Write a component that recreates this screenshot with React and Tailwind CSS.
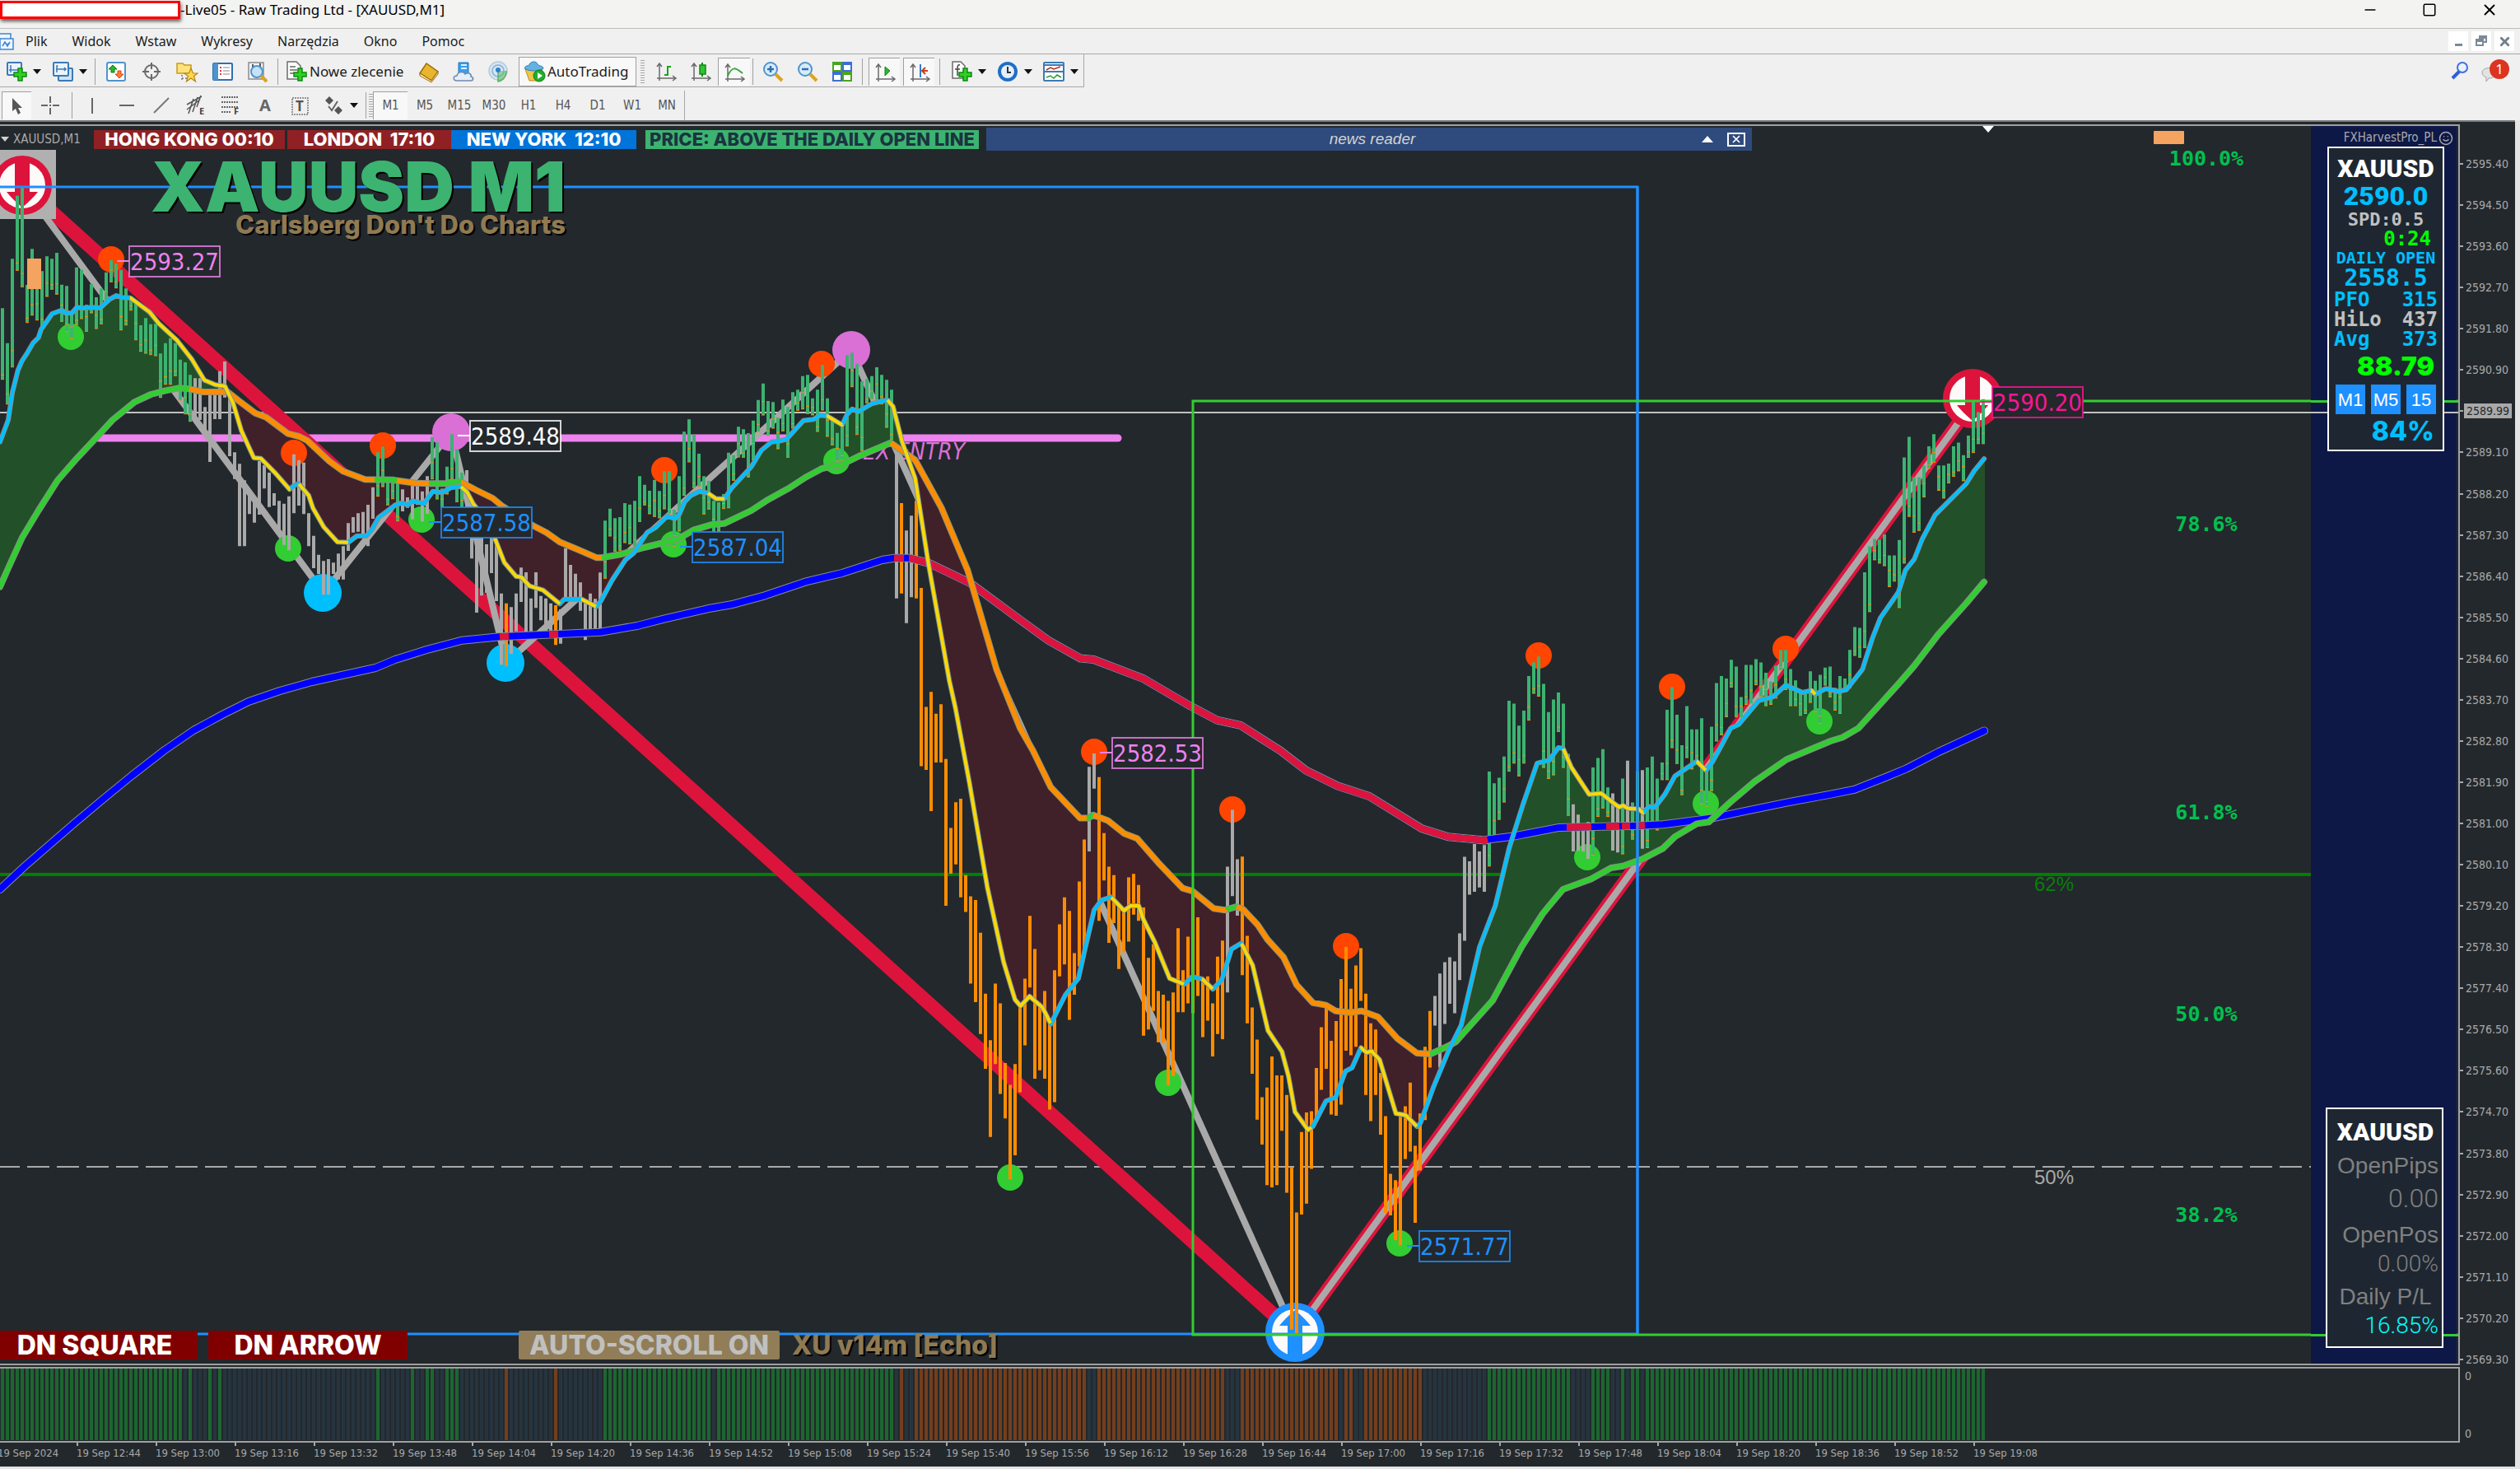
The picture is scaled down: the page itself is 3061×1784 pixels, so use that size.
import React from 'react'
import { Minus, Smile, Square, X } from 'lucide-react'

/* ---------- price data ---------- */

// high/low pairs, one block per stretch of the session; k and y0 turn them into chart units
const blocks = [
  {
    k: 3, y0: 180, bars: [
      583, 842, 710, 932, 403, 797, 173, 445, 145, 505, 498, 635, 367, 608, 480, 626, 448, 650, 394, 540,
      403, 514, 381, 532, 497, 631, 502, 668, 600, 693, 434, 643, 443, 621, 570, 667, 495, 600, 543, 657,
      511, 640, 452, 560, 408, 487, 421, 509, 443, 662, 511, 644, 545, 590, 565, 698, 645, 740, 619, 747,
      641, 752, 640, 756, 748, 908, 710, 860, 692, 860, 710, 829, 770, 918, 780, 968, 826, 995, 838, 988,
      838, 990, 943, 1035, 900, 1143, 900, 987, 812, 987, 777, 908, 895, 1122, 1108, 1205, 1150, 1450, 1210, 1450,
      1243, 1333, 1270, 1364, 1140, 1335, 1155, 1240, 1182, 1307, 1257, 1302, 1285, 1410, 1295, 1445, 1268, 1465, 1115, 1330,
      1136, 1302, 1145, 1333, 1330, 1450, 1412, 1530, 1481, 1551, 1504, 1627, 1497, 1627, 1510, 1551, 1477, 1571, 1450, 1571,
      1366, 1467, 1344, 1400, 1330, 1397, 1325, 1410, 1299, 1450, 1235, 1350, 1108, 1268, 1087, 1233, 1215, 1300, 1215, 1277,
      1215, 1358,
    ],
  },
  {
    k: 3, y0: 400, bars: [
      583, 663, 612, 650, 570, 692, 570, 640, 590, 700, 535, 672, 392, 545, 412, 618, 580, 650, 500, 600,
      382, 545, 437, 628, 522, 650, 513, 645, 645, 835, 700, 1032, 735, 970, 783, 960, 758, 888, 765, 990,
      962, 1222, 998, 1228, 1012, 1182, 962, 1100, 868, 993, 885, 1105, 980, 1100, 885, 1015, 971, 1060, 980, 1100,
      998, 1100, 1005, 1150, 1020, 1145, 797, 985, 858, 980, 890, 985, 922, 1025, 985, 1132, 962, 1100, 982, 1100,
      886, 1100, 697, 907, 653, 753, 688, 808, 684, 805, 633, 777, 638, 782, 625, 793, 535, 700, 566, 640,
      588, 672, 548, 682, 589, 687, 517, 654, 517, 672, 657, 790, 535, 735, 373, 605, 328, 483, 383, 577,
      453, 573, 535, 673, 552, 655, 625, 740, 630, 735, 600, 653, 449, 650, 458, 550, 355, 465, 364, 466,
      378, 538, 332, 475, 257, 373, 197, 312, 261, 387, 265, 360, 322, 435, 256, 370, 283, 466, 229, 360,
      220, 295, 170, 290, 166, 307, 251, 312, 220, 372, 130, 294, 251, 390, 330, 421, 377, 480, 345, 476,
      94, 425, 85, 209, 125, 383, 190, 442, 180, 268, 170, 255, 138, 258, 166, 272, 184, 357, 220, 400,
      430, 980, 633, 962, 733, 1070, 679, 976, 625, 980,
    ],
  },
  {
    k: 2.529, y0: 860, bars: [
      -369, 178, -4, 190, -50, 316, 17, 167, -12, 167, 156, 607, 368, 508, 289, 480, 278, 581, 513, 626,
      578, 846, 589, 903, 690, 1001, 877, 1108, 1020, 1317, 846, 1093, 907, 1185, 1090, 1260, 1157, 1447, 1093, 1373,
      910, 1180, 831, 1036, 638, 858, 740, 1138, 905, 1112, 869, 1138, 970, 1233, 805, 1210, 664, 824, 581, 787,
      623, 957, 752, 880, 532, 793, 403, 740, 180, 440, 139, 247, 212, 653, 384, 529, 487, 721, 513, 660,
      610, 801, 615, 750, 520, 717, 509, 634, 543, 653, 612, 1006, 767, 987, 725, 930, 869, 1026, 880, 1028,
      899, 1158, 873, 1130, 676, 934, 805, 934, 702, 907, 565, 937, 642, 884, 830, 1010, 824, 960, 907, 1070,
      763, 1001, 714, 1017, 487, 873, 312, 577, 464, 637, 456, 820, 699, 968, 919, 1123, 1018, 1264, 1195, 1340,
      1165, 1465, 1070, 1472, 1128, 1465, 1128, 1298, 1188, 1488, 1410, 1909, 1549, 1920, 1302, 1555, 1242, 1522, 1238, 1415,
      1105, 1270, 980, 1172, 920, 1108, 1022, 1248, 961, 1252, 832, 1218, 733, 1052, 862, 1066, 790, 1040, 737, 899,
      877, 1188, 968, 1268, 987, 1188, 1120, 1310, 1253, 1550, 1430, 1558, 1450, 1634, 1255, 1650, 1223, 1385, 1150, 1362,
      1344, 1581, 1245, 1420, 1040, 1265, 930, 1104, 884, 975, 815, 1104, 780, 970, 765, 908, 778, 937, 692, 835,
    ],
  },
  {
    k: 2.24, y0: 400, bars: [
      1435, 1663, 1447, 1538, 1400, 1530, 1420, 1518, 1403, 1530, 1203, 1460, 1235, 1380, 1220, 1333, 1162, 1286, 1010, 1202,
      1018, 1180, 1078, 1215, 1037, 1180, 943, 1063, 906, 990, 890, 998, 964, 1192, 1041, 1222, 1007, 1212, 988, 1094,
      1018, 1192, 1155, 1322, 1292, 1420, 1320, 1418, 1355, 1420, 1340, 1440, 1192, 1430, 1166, 1325, 1142, 1302, 1246, 1325,
      1262, 1418, 1290, 1423, 1222, 1427, 1173, 1345, 1287, 1387, 1203, 1350, 1199, 1413, 1192, 1410, 1162, 1340, 1222, 1362,
      1178, 1225, 1035, 1225, 973, 1138, 1048, 1181, 1131, 1266, 1025, 1165, 1088, 1196, 1088, 1180, 1058, 1290, 1190, 1297,
      1081, 1255, 962, 1120, 943, 1103, 950, 1054, 899, 973, 917, 1054, 1000, 1056, 913, 1020, 913, 1018, 897, 967,
      906, 1000, 934, 1024, 958, 1020, 915, 1003, 872, 927, 872, 980, 924, 1024, 955, 1024, 980, 1050, 980, 1045,
      930, 1015, 956, 1040, 940, 1072, 920, 968, 917, 1000, 975, 1036, 943, 1045, 950, 985, 872, 975, 810, 887,
      812, 892, 661, 866, 590, 768, 570, 627, 572, 636, 558, 643, 615, 700, 615, 685, 573, 757, 348, 636,
      292, 509, 402, 552, 402, 547, 370, 456, 318, 378, 285, 362, 370, 438, 370, 459, 365, 418, 318, 400,
      308, 385, 342, 412, 289, 348, 195, 335, 225, 311, 190, 311,
    ],
  },
]

const bars = blocks.flatMap(({ k, y0, bars: b }) =>
  Array.from({ length: b.length / 2 }, (_, i) => [y0 + b[2 * i] / k, y0 + b[2 * i + 1] / k])
)
const barX = i => 3 + i * 6

const inRuns = (i, runs) => runs.some(([a, b]) => i >= a && i <= b)

const bullBars = [[0, 38], [76, 80], [87, 93], [122, 180], [301, 317], [322, 325], [328, 328], [330, 331], [333, 401]]
const bearBars = [[102, 102], [112, 112], [182, 182], [185, 219], [222, 247], [251, 289]]
const bullHist = [[0, 36], [38, 38], [42, 42], [44, 44], [76, 76], [83, 83], [86, 87], [90, 92], [122, 143], [145, 180], [301, 317], [322, 325], [328, 328], [330, 331], [333, 401]]
const bearHist = [[102, 102], [112, 112], [182, 182], [185, 219], [222, 247], [251, 270], [272, 273], [276, 287]]

const trace = (x0, y0, kx, ky, pts) =>
  Array.from({ length: pts.length / 2 }, (_, i) => [x0 + pts[2 * i] / kx, y0 + pts[2 * i + 1] / ky])

const fastMA = [
  ...trace(0, 180, 3, 3, [0, 1070, 30, 990, 45, 890, 65, 810, 80, 775, 100, 745, 120, 710, 140, 690, 150, 660, 190, 603, 225, 590, 240, 601, 262, 601, 280, 580, 300, 583, 335, 580, 365, 582, 400, 550, 424, 537, 445, 544, 475, 545, 545, 597, 580, 640, 645, 700, 700, 770, 745, 845, 785, 862, 820, 867, 850, 930, 880, 1030, 925, 1128, 950, 1130, 1000, 1180, 1055, 1243, 1070, 1230, 1088, 1222, 1125, 1265, 1140, 1310, 1180, 1380, 1230, 1435, 1270, 1436, 1300, 1413, 1335, 1412, 1355, 1390, 1380, 1345, 1430, 1308]),
  ...trace(480, 400, 2.45, 3, [0, 640, 20, 632, 38, 640, 52, 625, 85, 635, 112, 590, 140, 595, 165, 577, 195, 572, 215, 595, 232, 635, 275, 700, 298, 765, 325, 850, 360, 900, 375, 902, 400, 935, 440, 950, 490, 1000, 503, 983, 555, 983, 598, 1010, 612, 990, 645, 915, 685, 840, 710, 815, 750, 740, 775, 722, 810, 680, 832, 690, 845, 675, 862, 628, 880, 605, 905, 590, 930, 596, 955, 617, 980, 617, 1000, 580, 1060, 500, 1090, 440, 1120, 410, 1140, 408, 1165, 400, 1215, 332, 1245, 328, 1265, 313, 1285, 315, 1330, 348, 1345, 310, 1360, 290, 1378, 300, 1420, 270, 1465, 257]),
  ...trace(1000, 380, 1.568, 2.24, [133, 255, 150, 350, 175, 450, 200, 680, 240, 1000]),
  ...trace(1140, 860, 2.529, 2.529, [52, 0, 95, 230, 150, 550, 200, 780, 235, 895, 252, 915, 280, 885, 320, 920, 345, 970, 360, 940, 390, 880, 430, 830, 450, 740, 478, 620, 500, 590, 530, 580, 570, 622, 590, 607, 615, 607, 630, 650, 665, 720, 710, 830, 755, 848, 780, 825, 810, 832, 843, 863, 870, 835, 900, 740, 930, 722, 965, 790, 1012, 990, 1055, 1055, 1075, 1130, 1095, 1240, 1135, 1295, 1150, 1285, 1190, 1207, 1220, 1195, 1250, 1115, 1270, 1105, 1298, 1043, 1315, 1058, 1330, 1053, 1355, 1080, 1405, 1245, 1435, 1250, 1470, 1285, 1480, 1275, 1520, 1165, 1568, 1050]),
  ...trace(1000, 1000, 1.568, 2, [1215, 490, 1250, 300]),
  ...trace(1700, 400, 2.063, 2.24, [240, 1568, 275, 1410, 310, 1290, 345, 1180, 375, 1172, 398, 1138, 410, 1140, 430, 1190, 475, 1265, 505, 1262, 550, 1300, 560, 1295, 572, 1303, 600, 1305, 610, 1315, 625, 1298, 640, 1300, 665, 1265, 690, 1215, 745, 1175, 768, 1200, 785, 1175, 800, 1145, 830, 1085, 850, 1075, 900, 1010, 935, 1000, 968, 968, 1010, 988, 1032, 982, 1042, 993, 1068, 977, 1100, 985, 1120, 980, 1160, 925, 1185, 840, 1205, 785, 1250, 715, 1268, 655, 1290, 625, 1310, 570, 1342, 505, 1420, 420, 1440, 385, 1465, 352]),
]

const slowMA = [
  ...trace(0, 180, 3, 3, [0, 1598, 30, 1530, 80, 1420, 140, 1320, 210, 1210, 280, 1130, 350, 1055, 410, 990, 490, 925, 550, 897, 600, 884, 650, 874, 690, 877, 740, 888, 830, 888, 870, 920, 930, 965, 970, 980, 1050, 1040, 1090, 1050, 1120, 1065, 1200, 1140, 1250, 1177, 1330, 1207, 1430, 1208]),
  ...trace(480, 400, 2.45, 3, [0, 550, 60, 560, 100, 562, 150, 562, 165, 557, 197, 557, 240, 585, 290, 615, 320, 645, 410, 715, 450, 740, 490, 775, 540, 800, 600, 832, 615, 832, 670, 820, 740, 795, 840, 765, 890, 730, 940, 712, 980, 707, 1060, 660, 1110, 620, 1170, 580, 1220, 540, 1270, 507, 1330, 492, 1380, 462, 1475, 413]),
  ...trace(1000, 380, 1.568, 2.24, [150, 375, 175, 400, 225, 530, 275, 700, 330, 970, 375, 1130]),
  ...trace(1140, 860, 2.529, 2.529, [290, 130, 345, 243, 435, 338, 460, 338, 475, 328, 520, 345, 570, 385, 610, 400, 680, 480, 750, 553, 780, 562, 845, 615, 880, 620, 915, 610, 935, 617, 980, 665, 1010, 710, 1060, 765, 1100, 850, 1150, 905, 1190, 912, 1220, 930, 1265, 935, 1300, 930, 1350, 948, 1410, 1015, 1470, 1060, 1512, 1062, 1568, 1037]),
  ...trace(1000, 1000, 1.568, 2, [1205, 530, 1275, 430, 1330, 300, 1370, 220]),
  ...trace(1700, 400, 2.063, 2.24, [375, 1568, 410, 1523, 480, 1495, 530, 1465, 560, 1460, 610, 1440, 660, 1412, 690, 1380, 745, 1345, 775, 1340, 830, 1285, 890, 1230, 970, 1170, 1080, 1120, 1110, 1110, 1150, 1085, 1200, 1025, 1250, 965, 1290, 915, 1350, 830, 1420, 745, 1465, 687]),
]

const trendMA = [
  [0, 1080], [30, 1052], [60, 1026], [90, 1000], [127, 969], [160, 942], [200, 911], [235, 887], [270, 868], [302, 852], [340, 839], [379, 828], [456, 811],
  ...trace(480, 400, 2.45, 3, [0, 1203, 100, 1165, 200, 1133, 310, 1120, 450, 1112, 610, 1103, 720, 1080, 800, 1055, 930, 1018, 1000, 1003, 1100, 970, 1220, 920, 1330, 888, 1450, 840]),
  ...trace(1000, 380, 1.568, 2.24, [135, 667, 165, 667, 200, 680, 280, 735, 370, 830, 430, 892, 490, 940, 515, 943, 610, 995, 700, 1070, 750, 1108, 795, 1122, 870, 1190, 920, 1245, 980, 1287, 1040, 1315, 1140, 1403, 1190, 1425, 1260, 1435]),
  ...trace(1700, 400, 2.063, 2.24, [225, 1387, 290, 1378, 400, 1355, 600, 1350, 660, 1347, 780, 1330, 860, 1312, 970, 1287, 1080, 1265, 1140, 1252, 1210, 1222, 1270, 1195, 1350, 1150, 1465, 1092]),
]

const fastDown = [[158, 352], [363, 423], [560, 680], [706, 724], [860, 880], [1004, 1023], [1078, 1276], [1350, 1438], [1460, 1473], [1508, 1593], [1653, 1721], [1899, 1996], [2061, 2072], [2200, 2205]]
const slowDown = [[230, 455], [482, 521], [560, 731], [1082, 1320], [1328, 1488], [1502, 1737]]
const trendDown = [[607, 618], [667, 678], [1086, 1098], [1104, 1807], [1903, 1933], [1951, 1967], [1970, 1980], [1987, 1998]]

const at = (pts, x) => {
  const i = pts.findIndex(p => p[0] >= x)
  if (i <= 0) return i === 0 ? pts[0][1] : pts[pts.length - 1][1]
  const [x1, y1] = pts[i - 1]
  const [x2, y2] = pts[i]
  return y1 + ((y2 - y1) * (x - x1)) / (x2 - x1)
}
const join = pts => pts.map(([x, y]) => `${x.toFixed(1)},${y.toFixed(1)}`).join(' ')
const slice = (pts, a, b) => [[a, at(pts, a)], ...pts.filter(p => p[0] > a && p[0] < b), [b, at(pts, b)]]

// cloud between the two averages, cut wherever they cross
const clouds = () => {
  const out = []
  let cur = null
  for (let x = 0; x <= 2411; x++) {
    const f = at(fastMA, x)
    const s = at(slowMA, x)
    const up = f < s
    if (!cur || cur.up !== up) {
      cur = { up, top: [], bottom: [] }
      out.push(cur)
    }
    cur.top.push([x, f])
    cur.bottom.unshift([x, s])
  }
  return out
}

const barPath = keep =>
  bars.map(([hi, lo], i) => (keep(i) ? `M${barX(i)} ${hi.toFixed(1)}V${lo.toFixed(1)}` : '')).join('')
const isBull = i => inRuns(i, bullBars)
const isBear = i => inRuns(i, bearBars)
const openTicks = bars.map(([hi, lo], i) => {
  if (!isBull(i)) return ''
  const open = lo - Math.min(lo - hi, 36) * (0.15 + 0.1 * ((i * 7) % 5))
  return `M${barX(i) - 2} ${lo.toFixed(1)}h4M${barX(i) - 2} ${open.toFixed(1)}h4`
}).join('')

/* ---------- chart parts ---------- */

const highs = [[135, 315], [357, 550], [465, 541], [807, 571], [998, 442], [1329, 913], [1497, 983], [1635, 1149], [1869, 796], [2031, 834], [2169, 788]]
const lows = [[86, 409], [350, 666], [512, 631], [818, 661], [1016, 560], [1227, 1430], [1419, 1315], [1700, 1510], [1928, 1041], [2072, 976], [2210, 876]]

const priceTags = [
  { x: 157, y: 299, price: '2593.27', color: '#ee82ee' },
  { x: 571, y: 511, price: '2589.48', color: '#ffffff' },
  { x: 536, y: 616, price: '2587.58', color: '#1e90ff' },
  { x: 841, y: 646, price: '2587.04', color: '#1e90ff' },
  { x: 1351, y: 896, price: '2582.53', color: '#ee82ee' },
  { x: 1724, y: 1495, price: '2571.77', color: '#1e90ff' },
  { x: 2420, y: 470, price: '2590.20', color: '#ff1493' },
]

const fibs = [[192, '100.0%'], [636, '78.6%'], [986, '61.8%'], [1231, '50.0%'], [1475, '38.2%']]

const Average = ({ pts, up, down, runs, width }) => (
  <g fill="none" strokeLinecap="butt" strokeLinejoin="round">
    <polyline points={join(pts)} stroke="#8c8c8c" strokeWidth={width + 2} strokeLinecap="round" />
    <polyline points={join(pts)} stroke={up} strokeWidth={width} strokeLinecap="round" />
    {runs.map(([a, b]) => (
      <polyline key={a} points={join(slice(pts, a, b))} stroke={down} strokeWidth={width} />
    ))}
  </g>
)

const Signal = ({ x, y, color, flip }) => (
  <g transform={`translate(${x} ${y})${flip ? ' rotate(180)' : ''}`}>
    <circle r="32" fill="#fffafa" stroke={color} strokeWidth="8" />
    <path d="M-9 -32H9V8H19Q12 17 0 27Q-12 17 -19 8H-9Z" fill={color} />
  </g>
)

const PriceTag = ({ x, y, price, color }) => (
  <g>
    <path d={`M${x - 15} ${y + 18}h15`} stroke={color} strokeWidth="2" />
    <rect x={x} y={y} width="110" height="37" fill="#23282c" stroke={color} strokeOpacity="0.8" strokeWidth="2" />
    <text x={x + 55} y={y + 29} textAnchor="middle" fill={color} className="text-[29px]">{price}</text>
  </g>
)

const Chart = () => (
  <svg viewBox="0 153 2986 1503" className="block h-auto w-full font-['DejaVu_Sans_Condensed','Noto_Sans',sans-serif]">
    <rect y="153" width="2986" height="1503" fill="#23282c" />

    <path d="M0 501H2986" stroke="#c0c0c0" strokeWidth="2" />
    <path d="M120 532H1358" stroke="#ee82ee" strokeWidth="9" strokeLinecap="round" />
    <path d="M0 1062H2807" stroke="#008000" strokeWidth="4" />
    <path d="M-3 1417H2807" stroke="#a9a9a9" strokeWidth="2" strokeDasharray="27 9" />
    <text x="1048" y="558" fill="#da70d6" className="text-[28px] italic">EX ENTRY</text>

    <path d="M27 225L1573 1620" stroke="#dc143c" strokeWidth="17" />
    <path d="M1573 1620L2395 491" stroke="#dc143c" strokeWidth="16" />
    <path d="M27 225L393 720L548 525L615 805L1034 425L1573 1620L2395 491" fill="none" stroke="#a9a9a9" strokeWidth="8" />
    <rect x="0" y="182" width="68" height="84" fill="#b0b0b0" />

    {clouds().map(c => (
      <polygon key={c.top[0][0]} points={join([...c.top, ...c.bottom])} fill={c.up ? '#225029' : '#40212a'} />
    ))}

    <Signal x={27} y={225} color="#dc143c" />
    <Signal x={2396} y={484} color="#dc143c" />
    <Signal x={1573} y={1618} color="#1e90ff" flip />
    {highs.map(([x, y]) => <circle key={x} cx={x} cy={y} r="16" fill="#ff4500" />)}
    {lows.map(([x, y]) => <circle key={x} cx={x} cy={y} r="16" fill="#32cd32" />)}
    {[[548, 525], [1034, 425]].map(([x, y]) => <circle key={x} cx={x} cy={y} r="23" fill="#da70d6" />)}
    {[[392, 720], [614, 805]].map(([x, y]) => <circle key={x} cx={x} cy={y} r="23" fill="#00bfff" />)}

    <path d="M0 227H1989V1620H0" fill="none" stroke="#1e90ff" strokeWidth="3" />
    <path d={barPath(i => !isBull(i) && !isBear(i))} stroke="#a9a9a9" strokeWidth="4" />
    <path d={barPath(isBull)} stroke="#3cb371" strokeWidth="4" />
    <path d={barPath(isBear)} stroke="#ff8c00" strokeWidth="4" />
    <path d={openTicks} stroke="#ff8c00" strokeWidth="1" />
    <rect x="33" y="314" width="17" height="37" fill="#f4a460" />

    <Average pts={trendMA} up="#0000ff" down="#dc143c" runs={trendDown} width={8} />
    <Average pts={slowMA} up="#32cd32" down="#ff8c00" runs={slowDown} width={6} />
    <Average pts={fastMA} up="#00bfff" down="#ffd700" runs={fastDown} width={4} />

    <path d="M1989 227V1620" stroke="#1e90ff" strokeWidth="3" />
    <path d="M2986 487H1449V1621H2986" fill="none" stroke="#32cd32" strokeWidth="3" />

    {priceTags.map(t => <PriceTag key={t.price} {...t} />)}
    {fibs.map(([y, label]) => (
      <text key={label} x="2680" y={y + 9} textAnchor="middle" fill="#00c050" className="font-['DejaVu_Sans_Mono',monospace] text-[25px] font-bold">{label}</text>
    ))}
    <text x="2495" y="1082" textAnchor="middle" fill="#0a7d0a" className="font-['Liberation_Sans',sans-serif] text-[24px]">62%</text>
    <text x="2495" y="1438" textAnchor="middle" fill="#a9a9a9" className="font-['Liberation_Sans',sans-serif] text-[24px]">50%</text>

    <path d="M2408 153H2422L2415 161Z" fill="#ffffff" />
    <rect x="2616" y="159" width="37" height="16" rx="1" fill="#f4a460" />
  </svg>
)

const Histogram = () => (
  <svg viewBox="0 0 2986 88" preserveAspectRatio="none" className="block h-[88px] w-full">
    {bars.map((_, i) => (
      <rect
        key={i}
        x={barX(i) - 2}
        y="0"
        width="4"
        height="87"
        fill={inRuns(i, bullHist) ? '#1c6630' : inRuns(i, bearHist) ? '#733e1d' : '#26343f'}
      />
    ))}
  </svg>
)

/* ---------- side panels ---------- */

const PanelRow = ({ name, value, className = '' }) => (
  <div className={`flex h-[24px] items-center justify-between px-[6px] text-[24px] ${className}`}>
    <span>{name}</span>
    <span>{value}</span>
  </div>
)

const QuotePanel = () => (
  <section className="flex h-[370px] flex-col border-2 border-white bg-[#1e2731] pt-[6px] font-['DejaVu_Sans_Mono',monospace] font-bold text-[#00bfff]">
    <div className="flex h-[36px] items-center justify-center font-['Roboto',sans-serif] text-[30px] font-black text-white">XAUUSD</div>
    <div className="flex h-[32px] items-center justify-center font-['Roboto',sans-serif] text-[32px] font-black">2590.0</div>
    <div className="flex h-[24px] items-center justify-center text-[22px] text-[#c0c0c0]">SPD:0.5</div>
    <div className="flex h-[24px] items-center justify-end pr-[14px] text-[24px] text-[#00ff00]">0:24</div>
    <div className="flex h-[22px] items-center justify-center text-[20px] whitespace-nowrap">DAILY OPEN</div>
    <div className="flex h-[28px] items-center justify-center text-[28px]">2558.5</div>
    <PanelRow name="PFO" value="315" />
    <PanelRow name="HiLo" value="437" className="text-[#c0c0c0]" />
    <PanelRow name="Avg" value="373" />
    <div className="flex h-[42px] items-center justify-end pr-[10px] font-['Inter',sans-serif] text-[32px] font-black text-[#00ff00]">88.79</div>
    <div className="mt-px flex justify-between px-[8px]">
      {['M1', 'M5', '15'].map(tf => (
        <button key={tf} type="button" className="h-[36px] w-[36px] bg-[#1e90ff] font-['Liberation_Sans',sans-serif] text-[22px] font-normal text-white">{tf}</button>
      ))}
    </div>
    <div className="flex h-[42px] items-center justify-end pr-[10px] font-['Inter',sans-serif] text-[32px] font-extrabold">84%</div>
  </section>
)

const AccountPanel = () => (
  <section className="flex h-[292px] flex-col border-2 border-white bg-[#1e2731] pr-[4px] pl-[6px] pt-[7px] font-['Liberation_Sans',sans-serif] text-[28px] text-[#808080]">
    <div className="flex h-[40px] items-center justify-center font-['Roboto',sans-serif] text-[30px] font-black text-white">XAUUSD</div>
    <div className="mt-[4px] flex h-[36px] items-center justify-end">OpenPips</div>
    <div className="mt-[2px] flex h-[38px] items-center justify-end font-['Roboto',sans-serif] text-[32px] font-light">0.00</div>
    <div className="mt-[8px] flex h-[36px] items-center justify-end">OpenPos</div>
    <div className="flex h-[34px] items-center justify-end font-['Roboto',sans-serif] font-light">0.00%</div>
    <div className="mt-[5px] flex h-[36px] items-center justify-center">Daily P/L</div>
    <div className="flex h-[34px] items-center justify-end font-['Roboto',sans-serif] font-light text-[#00ffff]">16.85%</div>
  </section>
)

const Badge = ({ children, className }) => (
  <div className={`flex h-[23px] items-center justify-center font-['Inter',sans-serif] text-[22px] leading-[23px] font-extrabold whitespace-pre ${className}`}>{children}</div>
)

const Overlay = () => (
  <div className="absolute inset-0 flex flex-col font-['Inter',sans-serif]">
    <div className="flex items-center pt-[2px] text-white">
      <div className="flex h-[28px] w-[114px] items-center gap-[4px] font-['DejaVu_Sans_Condensed','Noto_Sans',sans-serif] text-[15px] text-[#a9a9a9]">
        <svg width="12" height="8" viewBox="0 0 12 8"><path d="M1 1H11L6 7Z" fill="#d0d0d0" /></svg>
        XAUUSD,M1
      </div>
      <Badge className="w-[232px] bg-[#8f2124]">HONG KONG 00:10</Badge>
      <Badge className="ml-[3px] w-[199px] bg-[#8f2124]">{'LONDON  17:10'}</Badge>
      <Badge className="w-[225px] bg-[#0074d9]">{'NEW YORK  12:10'}</Badge>
      <Badge className="ml-[11px] w-[405px] bg-[#3cb371] text-[#1c3340]">PRICE: ABOVE THE DAILY OPEN LINE</Badge>
      <div className="ml-[9px] flex h-[28px] w-[930px] items-center bg-[#2f4a7c] font-['Liberation_Sans',sans-serif] text-[19px] text-[#d3d3d3] italic">
        <span className="flex-1 pl-[70px] text-center">news reader</span>
        <button type="button" aria-label="Collapse" className="mr-[16px]">
          <svg width="16" height="10" viewBox="0 0 16 10"><path d="M8 1L15 9H1Z" fill="#fff" /></svg>
        </button>
        <button type="button" aria-label="Close reader" className="mr-[8px] flex h-[17px] w-[22px] items-center justify-center border-2 border-white">
          <X size={14} strokeWidth={3} color="#fff" />
        </button>
      </div>
    </div>
    <div className="w-[687px] text-right">
      <h1 className="mt-[8px] text-[84px] leading-[72px] font-black whitespace-nowrap text-[#3cb371] [text-shadow:2px_2px_0_#000]">XAUUSD M1</h1>
      <p className="text-[31px] leading-[20px] font-extrabold whitespace-nowrap text-[#8f7a52] [text-shadow:2px_2px_0_#000]">Carlsberg Don't Do Charts</p>
    </div>
    <div className="mt-auto mb-[5px] flex h-[35px] items-center text-[32px] leading-[35px] font-extrabold whitespace-nowrap">
      <button type="button" className="h-full w-[240px] bg-[#800000] pr-[10px] text-white">DN SQUARE</button>
      <button type="button" className="ml-[13px] h-full w-[242px] bg-[#800000] text-white">DN ARROW</button>
      <button type="button" className="ml-[135px] h-full w-[317px] rounded-xs bg-[#917d57] text-[#c0c0c0]">AUTO-SCROLL ON</button>
      <span className="ml-[15px] text-[#8f7a52] [text-shadow:2px_2px_0_#000]">XU v14m [Echo]</span>
    </div>
  </div>
)

const SideRail = () => (
  <div className="absolute inset-y-0 right-0 flex w-[179px] flex-col">
    <div className="absolute inset-y-0 left-0 w-[177px] bg-[#0e1847]" />
    <div className="absolute top-[333px] right-0 left-0 h-[3px] bg-[#32cd32]" />
    <div className="absolute top-[347px] right-0 left-0 h-[2px] bg-[#c0c0c0]" />
    <div className="absolute right-0 bottom-[33px] left-0 h-[3px] bg-[#32cd32]" />
    <div className="relative flex h-full flex-col justify-between pb-[19px]">
      <div>
        <div className="flex h-[25px] items-center justify-end gap-[2px] pt-[4px] pr-[6px] font-['DejaVu_Sans_Condensed','Noto_Sans',sans-serif] text-[15px] text-[#a9a9a9]">
          FXHarvestPro_PL
          <Smile size={18} strokeWidth={2} />
        </div>
        <div className="ml-[20px] w-[142px]"><QuotePanel /></div>
      </div>
      <div className="ml-[18px] w-[143px]"><AccountPanel /></div>
    </div>
  </div>
)

/* ---------- window chrome ---------- */

const Caret = () => (
  <svg width="12" height="8" viewBox="0 0 12 8"><path d="M1 1H11L6 7Z" fill="#111" /></svg>
)

const Sep = () => <div className="mx-[3px] h-[32px] w-px shrink-0 bg-[#a0a0a0]" />
const Grip = ({ className = '' }) => (
  <div className={`h-[28px] w-[5px] shrink-0 bg-[repeating-linear-gradient(#a8a8a8_0_1px,#f0f0f0_1px_3px)] ${className}`} />
)

const Tool = ({ label, pressed, children, className = 'w-[43px]' }) => (
  <button
    type="button"
    aria-label={label}
    className={`flex h-[34px] shrink-0 items-center justify-center ${className} ${pressed ? 'border-t border-l border-[#a0a0a0] bg-[#f8f8f8]' : ''}`}
  >
    {children}
  </button>
)

const DropTool = ({ label, children }) => (
  <button type="button" aria-label={label} className="flex h-[34px] w-[56px] shrink-0 items-center justify-center">
    {children}
    <span className="ml-[5px]"><Caret /></span>
  </button>
)

const Icon = ({ children }) => (
  <svg width="28" height="28" viewBox="0 0 28 28" fill="none" strokeWidth="2">{children}</svg>
)

const Plus = () => <path d="M16 10H21V15H26V20H21V25H16V20H11V15H16Z" fill="#2fd11f" stroke="#0d8a12" strokeWidth="1.5" />
const Axes = () => <path d="M6 25V5M3 8L6 4L9 8M3 22H25M22 19L26 22L22 25" stroke="#6a6a6a" strokeWidth="1.5" />

const icons = {
  newChart: <Icon><rect x="3" y="3" width="17" height="15" rx="1" fill="#e8f3fc" stroke="#3c7ab5" /><path d="M7 6V15M5 12H16" stroke="#3c7ab5" strokeWidth="1.5" /><Plus /></Icon>,
  profiles: <Icon><rect x="9" y="10" width="17" height="15" rx="1" fill="#cfe3f5" stroke="#3c7ab5" /><rect x="3" y="3" width="18" height="16" rx="1" fill="#eaf4fd" stroke="#3c7ab5" /><path d="M7 7V15M6 11H18M8 8L7 6M16 9L18 11L16 13" stroke="#3c7ab5" strokeWidth="1.5" /></Icon>,
  market: <Icon><rect x="3" y="3" width="22" height="22" rx="2" fill="#fff" stroke="#4f93cf" /><path d="M10 6L15 11H12V15H8V11H5Z" fill="#2bb52b" stroke="#0e8413" strokeWidth="1" /><path d="M18 22L23 17H20V13H16V17H13Z" fill="#ff7a3c" stroke="#d24a12" strokeWidth="1" /></Icon>,
  cross: <Icon><circle cx="14" cy="14" r="8" stroke="#6b6b6b" /><path d="M14 3V11M14 17V25M3 14H11M17 14H25" stroke="#6b6b6b" /></Icon>,
  favourites: <Icon><path d="M2 4H9L11 6H19V16H2Z" fill="#ffe27a" stroke="#c79a1d" strokeWidth="1.5" /><path d="M8 18V26M8 22H14" stroke="#777" strokeWidth="1.5" strokeDasharray="2 2" /><path d="M19 10L21.5 16H27L22.5 19.5L24.5 26L19 22L13.5 26L15.5 19.5L11 16H16.5Z" fill="#ffd84d" stroke="#b98512" strokeWidth="1.2" /></Icon>,
  terminal: <Icon><rect x="3" y="4" width="23" height="20" rx="1" fill="#fff" stroke="#2f6fb0" /><rect x="3" y="4" width="6" height="20" fill="#4f93cf" /><path d="M11 9H13M11 13H13M11 17H13" stroke="#e03a3a" /><path d="M15 9H23M15 13H23M15 17H23" stroke="#c4c4c4" /></Icon>,
  tester: <Icon><rect x="3" y="3" width="18" height="20" fill="#f4f4f4" stroke="#8a8a8a" strokeWidth="1.5" /><path d="M8 5V10M17 4V12" stroke="#555" /><circle cx="13" cy="14" r="7" fill="#bfe0f8" fillOpacity="0.9" stroke="#4f93cf" /><path d="M18 19L25 26" stroke="#d9a520" strokeWidth="4" /></Icon>,
  order: <Icon><path d="M3 2H14L19 7V23H3Z" fill="#fff" stroke="#6b6b6b" strokeWidth="1.5" /><path d="M6 8H13M6 12H15M6 16H11" stroke="#666" strokeWidth="1.5" /><Plus /></Icon>,
  editor: <Icon><path d="M3 16L11 4L25 14L17 25Z" fill="#e9b52e" stroke="#9a6c08" strokeWidth="1.5" /><path d="M3 16L17 25L25 14V17L17 27L3 19Z" fill="#fff0b5" stroke="#9a6c08" strokeWidth="1" /></Icon>,
  cloud: <Icon><path d="M8 3H20V17H8Z" fill="#38a0ea" stroke="#1a79c0" strokeWidth="1" /><path d="M11 6H18M11 10H18" stroke="#d9efff" /><path d="M6 25C1 25 1 19 6 19C7 14 14 13 16 17C20 14 24 17 23 20C27 21 26 25 23 25Z" fill="#e6eefa" stroke="#6c87b4" strokeWidth="1.5" /></Icon>,
  signals: <Icon><circle cx="14" cy="13" r="11" fill="#d6e6f2" stroke="#b4cbdb" strokeWidth="1.5" /><circle cx="14" cy="13" r="7" stroke="#7fb0dc" strokeWidth="1.5" /><path d="M14 13V26C20 25 24 20 24 13" fill="#58b858" fillOpacity="0.5" stroke="#5cb45c" strokeWidth="1.5" /><circle cx="14" cy="12" r="3" fill="#2f7fd0" /></Icon>,
  auto: <Icon><path d="M3 11L8 25H19L24 11Z" fill="#f1c548" stroke="#b98c1c" strokeWidth="1" /><path d="M2 10C4 5 8 8 8 5C10 1 17 1 18 5C20 8 24 6 25 10C20 14 7 14 2 10Z" fill="#62b2e4" stroke="#2c7fb8" strokeWidth="1" /><circle cx="20" cy="19" r="7" fill="#1fae2a" stroke="#0e7c16" strokeWidth="1" /><path d="M18 15L24 19L18 23Z" fill="#fff" /></Icon>,
  barsChart: <Icon><Axes /><path d="M12 18H16V8H20" stroke="#1da01d" /></Icon>,
  candles: <Icon><Axes /><path d="M16 3V20" stroke="#118811" /><rect x="13" y="6" width="7" height="11" fill="#2fc52f" stroke="#118811" strokeWidth="1.5" /></Icon>,
  line: <Icon><Axes /><path d="M6 18C12 5 16 9 24 15" stroke="#3aa63a" /></Icon>,
  zoomIn: <Icon><circle cx="11" cy="11" r="8" fill="#d7ecfb" stroke="#4f93cf" /><path d="M11 7V15M7 11H15" stroke="#2f6fb0" strokeWidth="2.5" /><path d="M17 17L25 25" stroke="#dba520" strokeWidth="4" /></Icon>,
  zoomOut: <Icon><circle cx="11" cy="11" r="8" fill="#d7ecfb" stroke="#4f93cf" /><path d="M7 11H15" stroke="#2f6fb0" strokeWidth="2.5" /><path d="M17 17L25 25" stroke="#dba520" strokeWidth="4" /></Icon>,
  tile: <Icon><rect x="2" y="2" width="12" height="12" fill="#4aa51c" /><rect x="14" y="2" width="12" height="12" fill="#3d6fd0" /><rect x="2" y="14" width="12" height="12" fill="#3d6fd0" /><rect x="14" y="14" width="12" height="12" fill="#4aa51c" /><path d="M4 9H12M16 9H24M4 21H12M16 21H24" stroke="#fff" strokeWidth="6" /></Icon>,
  scroll: <Icon><Axes /><path d="M14 7L20 12L14 18Z" fill="#2fb52f" stroke="#118811" strokeWidth="1" /></Icon>,
  shift: <Icon><Axes /><path d="M15 4V20" stroke="#2f7fd0" /><path d="M24 12H18M21 8L17 12L21 16" stroke="#c8401a" /></Icon>,
  indicators: <Icon><path d="M3 2H13L18 7V22H3Z" fill="#fff" stroke="#6b6b6b" strokeWidth="1.5" /><path d="M12 6C9 5 9 8 9 11V19M6 11H12" stroke="#444" strokeWidth="1.5" /><Plus /></Icon>,
  periods: <Icon><circle cx="14" cy="14" r="12" fill="#1f6fc4" /><circle cx="14" cy="14" r="8" fill="#e4f0fb" /><path d="M14 8V15H18" stroke="#333" /></Icon>,
  templates: <Icon><rect x="2" y="3" width="24" height="22" rx="1" fill="#fff" stroke="#3c7ab5" /><path d="M2 6H26M2 14H26" stroke="#3c7ab5" /><path d="M5 12L10 9L14 11L22 8" stroke="#b03020" strokeWidth="1.5" /><path d="M5 21L10 19L14 22L18 18L23 21" stroke="#2c9a2c" strokeWidth="1.5" /></Icon>,
  pointer: <Icon><path d="M8 4V20L12 17L15 24L18 22L15 16H20Z" fill="#555" /></Icon>,
  crosshair: <Icon><path d="M14 3V11M14 17V25M3 14H11M17 14H25M13 14H15" stroke="#666" /></Icon>,
  vline: <Icon><path d="M14 5V24" stroke="#666" /></Icon>,
  hline: <Icon><path d="M5 14H23" stroke="#666" /></Icon>,
  diag: <Icon><path d="M5 23L23 5" stroke="#777" /></Icon>,
  channel: <Icon><path d="M3 19L19 7M3 13L21 3M5 24L11 6M10 22L16 4M15 16L20 2" stroke="#555" strokeWidth="1.5" /><text x="18" y="25" fill="#444" stroke="none" className="text-[11px] font-bold">E</text></Icon>,
  fibo: <Icon><path d="M3 4H24M3 10H24M3 16H24M3 22H15" stroke="#666" strokeDasharray="2 1" /><text x="18" y="25" fill="#444" stroke="none" className="text-[11px] font-bold">F</text></Icon>,
  label: <Icon><rect x="5" y="5" width="19" height="20" stroke="#777" strokeWidth="1.5" strokeDasharray="2 1" /><text x="14" y="21" textAnchor="middle" fill="#555" stroke="none" className="text-[17px] font-bold">T</text></Icon>,
  arrows: <Icon><path d="M9 3L14 8L9 13L4 8ZM20 15L25 20L20 25L15 20Z" fill="#555" /><path d="M8 15L12 20L19 9" stroke="#666" /></Icon>,
}

const menu = ['Plik', 'Widok', 'Wstaw', 'Wykresy', 'Narzędzia', 'Okno', 'Pomoc']
const timeframes = ['M1', 'M5', 'M15', 'M30', 'H1', 'H4', 'D1', 'W1', 'MN']

const TitleBar = () => (
  <header className="flex h-[35px] items-start justify-between border-b border-[#bdbdbd] bg-[#f3f3f2]">
    <div className="flex items-center">
      <div className="h-[22px] w-[219px] border-[3px] border-[#ff0000] bg-white shadow-[1px_3px_4px_rgba(0,0,0,0.6)]" />
      <span className="text-[17px] leading-[24px] text-black">-Live05 - Raw Trading Ltd - [XAUUSD,M1]</span>
    </div>
    <div className="flex h-[24px] items-center gap-[53px] pr-[26px] text-black">
      <button type="button" aria-label="Minimize"><Minus size={20} strokeWidth={2} /></button>
      <button type="button" aria-label="Maximize"><Square size={18} strokeWidth={2} /></button>
      <button type="button" aria-label="Close"><X size={22} strokeWidth={2} /></button>
    </div>
  </header>
)

const MenuBar = () => (
  <nav className="flex h-[31px] items-center justify-between border-b border-[#a8a8a8] bg-[#f0f0f0] pr-[7px]">
    <div className="flex items-center gap-[30px] text-[16px] text-[#1b1b1b]">
      <svg width="17" height="22" viewBox="0 0 17 22" className="-mr-[16px]" fill="#eef6ff" stroke="#3f86d0" strokeWidth="1.5">
        <path d="M-3 2H13V14H-3Z" />
        <path d="M0 8H16V21H0ZM3 17L6 12L9 17L12 12" />
      </svg>
      {menu.map(m => <button key={m} type="button">{m}</button>)}
    </div>
    <div className="flex gap-[4px] text-[#6f7f8c]">
      <button type="button" aria-label="Minimize chart" className="flex h-[24px] w-[24px] items-end justify-center bg-white pb-[6px]"><span className="h-[3px] w-[9px] bg-[#7b8a96]" /></button>
      <button type="button" aria-label="Restore chart" className="flex h-[24px] w-[24px] items-center justify-center bg-white">
        <svg width="14" height="14" viewBox="0 0 14 14" fill="#fff" stroke="#7b8a96" strokeWidth="2"><path d="M5 1H13V8H5ZM5 3H13" /><path d="M1 5H9V12H1ZM1 7H9" /></svg>
      </button>
      <button type="button" aria-label="Close chart" className="flex h-[24px] w-[24px] items-center justify-center bg-white"><X size={17} strokeWidth={4} /></button>
    </div>
  </nav>
)

const MainToolbar = () => (
  <div className="flex h-[40px] items-center justify-between bg-[#f0f0f0] pr-[12px] text-[#1b1b1b]">
    <div className="flex h-full items-center border-r border-b border-[#a8a8a8] pt-[3px]">
      <DropTool label="New chart">{icons.newChart}</DropTool>
      <DropTool label="Profiles">{icons.profiles}</DropTool>
      <Sep />
      <Tool label="Market watch">{icons.market}</Tool>
      <Tool label="Data window">{icons.cross}</Tool>
      <Tool label="Navigator">{icons.favourites}</Tool>
      <Tool label="Terminal">{icons.terminal}</Tool>
      <Tool label="Strategy tester">{icons.tester}</Tool>
      <Sep />
      <button type="button" className="flex w-[159px] items-center gap-[2px] pl-[5px] text-[17px] whitespace-nowrap">{icons.order}Nowe zlecenie</button>
      <Tool label="MetaEditor" className="w-[42px]">{icons.editor}</Tool>
      <Tool label="Hosting" className="w-[42px]">{icons.cloud}</Tool>
      <Tool label="Signals" className="w-[42px]">{icons.signals}</Tool>
      <button type="button" className="ml-[4px] flex h-[36px] w-[143px] items-center gap-[2px] border border-[#a0a0a0] bg-[#f8f8f8] pl-[4px] text-[17px]">{icons.auto}AutoTrading</button>
      <Grip className="mx-[5px]" />
      <Tool label="Bar chart" className="w-[42px]">{icons.barsChart}</Tool>
      <Tool label="Candlesticks" className="w-[42px]">{icons.candles}</Tool>
      <Tool label="Line chart" pressed className="w-[39px]">{icons.line}</Tool>
      <Sep />
      <Tool label="Zoom in" className="w-[42px]">{icons.zoomIn}</Tool>
      <Tool label="Zoom out" className="w-[42px]">{icons.zoomOut}</Tool>
      <Tool label="Tile windows" className="w-[42px]">{icons.tile}</Tool>
      <Sep />
      <Tool label="Auto scroll" pressed className="ml-[4px] w-[38px]">{icons.scroll}</Tool>
      <Tool label="Chart shift" pressed className="ml-[4px] w-[38px]">{icons.shift}</Tool>
      <div className="mx-[3px]"><Sep /></div>
      <DropTool label="Indicators">{icons.indicators}</DropTool>
      <DropTool label="Periods">{icons.periods}</DropTool>
      <DropTool label="Templates">{icons.templates}</DropTool>
    </div>
    <div className="flex items-center gap-[14px]">
      <button type="button" aria-label="Search">
        <svg width="22" height="24" viewBox="0 0 22 24" fill="none"><circle cx="14" cy="8" r="6" fill="#eaf2ff" stroke="#3f6fe0" strokeWidth="2" /><path d="M10 13L2 21" stroke="#2f5fd8" strokeWidth="4" /></svg>
      </button>
      <button type="button" aria-label="Messages">
        <svg width="36" height="34" viewBox="0 0 36 34">
          <path d="M2 19C2 12 20 11 20 19C20 25 13 26 10 26L7 30V25C4 24 2 22 2 19Z" fill="#e2e2e2" stroke="#a5a5a5" />
          <circle cx="23" cy="15" r="12" fill="#dc3420" />
          <text x="23" y="21" textAnchor="middle" fill="#fff" className="text-[17px]">1</text>
        </svg>
      </button>
    </div>
  </div>
)

const DrawToolbar = () => (
  <div className="flex h-[40px] items-center bg-[#f0f0f0] pt-[4px] text-[#555]">
    <Tool label="Cursor" pressed className="ml-[2px] w-[36px]">{icons.pointer}</Tool>
    <Tool label="Crosshair" className="w-[46px]">{icons.crosshair}</Tool>
    <Sep />
    <Tool label="Vertical line" className="w-[42px]">{icons.vline}</Tool>
    <Tool label="Horizontal line" className="w-[42px]">{icons.hline}</Tool>
    <Tool label="Trendline" className="w-[42px]">{icons.diag}</Tool>
    <Tool label="Channel" className="w-[42px]">{icons.channel}</Tool>
    <Tool label="Fibonacci" className="w-[42px]">{icons.fibo}</Tool>
    <button type="button" className="h-[34px] w-[42px] text-[20px] font-bold text-[#666]">A</button>
    <Tool label="Text label" className="w-[42px]">{icons.label}</Tool>
    <DropTool label="Arrows">{icons.arrows}</DropTool>
    <Sep />
    <Grip />
    {timeframes.map(tf => (
      <button
        key={tf}
        type="button"
        className={`h-[34px] w-[42px] font-['DejaVu_Sans_Condensed','Noto_Sans',sans-serif] text-[15px] ${tf === 'M1' ? 'border-t border-l border-[#a0a0a0] bg-[#f8f8f8]' : ''}`}
      >
        {tf}
      </button>
    ))}
    <div className="h-full w-px bg-[#a8a8a8]" />
  </div>
)

/* ---------- axes ---------- */

const prices = Array.from({ length: 30 }, (_, i) => (2595.4 - i * 0.9).toFixed(2))
const times = Array.from({ length: 25 }, (_, i) => {
  const m = 12 * 60 + 44 + i * 16
  return `19 Sep ${Math.floor(m / 60)}:${String(m % 60).padStart(2, '0')}`
})

const PriceAxis = () => (
  <div className="flex w-[67px] shrink-0 flex-col justify-between pt-[43px] pb-[2px] text-[14px] leading-[10px] text-[#a9a9a9]">
    {prices.map((p, i) => (
      <div key={p} className="flex h-[10px] items-center gap-[3px]">
        <span className="h-[2px] w-[4px] bg-[#a9a9a9]" />
        {i === 6
          ? <span className="-ml-[2px] bg-[#a9a9a9] px-[3px] py-[4px] text-[#23282c]">2589.99</span>
          : p}
      </div>
    ))}
  </div>
)

const TimeAxis = () => (
  <div className="flex h-[29px] overflow-hidden text-[13px] text-[#a9a9a9]">
    {['19 Sep 2024', ...times].map((t, i) => (
      <div key={t} className={`w-[96px] shrink-0 whitespace-nowrap ${i === 0 ? '-ml-[3px]' : ''}`}>
        <div className="h-[4px] w-[2px] bg-[#a9a9a9]" />
        <span className="block leading-[18px]">{t}</span>
      </div>
    ))}
  </div>
)

const App = () => (
  <div className="w-full overflow-hidden bg-[#f0f0f0] font-['Noto_Sans',sans-serif]">
    <TitleBar />
    <MenuBar />
    <MainToolbar />
    <DrawToolbar />
    <main className="border-r-[6px] border-b-[3px] border-[#e4e4e4] bg-[#23282c] font-['DejaVu_Sans_Condensed','Noto_Sans',sans-serif]">
      <div className="h-[5px] border-t-2 border-[#7a7a7a]" />
      <div className="flex">
        <div className="relative min-w-0 flex-1 border-y-2 border-r-2 border-[#a0a0a0]">
          <Chart />
          <Overlay />
          <SideRail />
        </div>
        <PriceAxis />
      </div>
      <div className="mt-[2px] flex">
        <div className="min-w-0 flex-1 border-y-2 border-r-2 border-[#a0a0a0]"><Histogram /></div>
        <div className="flex w-[67px] shrink-0 flex-col justify-between py-[3px] pl-[6px] text-[14px] leading-[16px] text-[#a9a9a9]">
          <span>0</span>
          <span>0</span>
        </div>
      </div>
      <TimeAxis />
    </main>
  </div>
)

export default App
